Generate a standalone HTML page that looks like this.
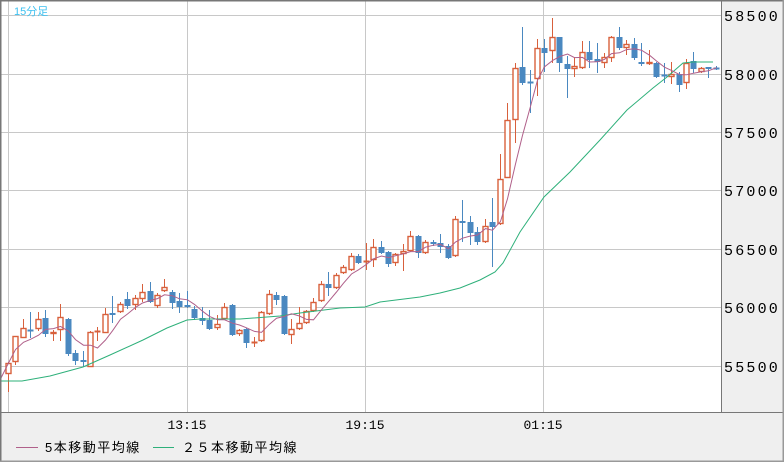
<!DOCTYPE html>
<html><head><meta charset="utf-8"><style>
html,body{margin:0;padding:0;width:784px;height:462px;overflow:hidden;background:#efefef;font-family:"Liberation Sans","Noto Sans CJK JP",sans-serif}
svg{display:block}
</style></head><body>
<svg id="s" width="784" height="462" xmlns="http://www.w3.org/2000/svg">
<rect x="0" y="0" width="784" height="462" fill="#efefef"/>
<rect x="1" y="1" width="720" height="411" fill="#fff"/>
<g stroke="#c8c8c8" stroke-width="1">
<line x1="1" y1="15.5" x2="721" y2="15.5"/><line x1="1" y1="74.5" x2="721" y2="74.5"/>
<line x1="1" y1="132.5" x2="721" y2="132.5"/><line x1="1" y1="190.5" x2="721" y2="190.5"/>
<line x1="1" y1="249.5" x2="721" y2="249.5"/><line x1="1" y1="307.5" x2="721" y2="307.5"/>
<line x1="1" y1="366.5" x2="721" y2="366.5"/>
<line x1="8.5" y1="1" x2="8.5" y2="412"/><line x1="187.5" y1="1" x2="187.5" y2="412"/>
<line x1="365.5" y1="1" x2="365.5" y2="412"/><line x1="543.5" y1="1" x2="543.5" y2="412"/>
</g>
<g id="c"></g>
<polyline fill="none" stroke="#2eb07a" stroke-width="1" points="1,381 22,381 50,376 83,367 110,355 143,340 167,328 187,320 200,319 240,319 280,316 300,313 340,308 365,307 380,302 420,297 440,293 460,288 480,280 495,272 503,263 520,232 544,197 570,172 600,140 627,110 653,88 667,77 683,63 693,62 713,62"/>
<polyline id="ma5" fill="none" stroke="#b0608a" stroke-width="1" points=""/>
<rect x="0" y="0" width="784" height="1.5" fill="#777"/>
<rect x="0" y="0" width="1.5" height="462" fill="#777"/>
<rect x="721" y="0" width="1" height="412" fill="#777"/>
<rect x="0" y="412" width="784" height="1" fill="#777"/>
<rect x="0" y="460.5" width="784" height="1.5" fill="#999"/>
<rect x="782.5" y="0" width="1.5" height="462" fill="#999"/>
<text x="14" y="15" font-size="11" fill="#3cc0f0" font-family="Liberation Sans,Noto Sans CJK JP,sans-serif">15分足</text>
<g font-size="15" fill="#000" font-family="Liberation Mono,monospace" letter-spacing="2.2">
<text x="724" y="21">58500</text><text x="724" y="80">58000</text><text x="724" y="138">57500</text>
<text x="724" y="196">57000</text><text x="724" y="255">56500</text><text x="724" y="313">56000</text>
<text x="724" y="372">55500</text>
</g>
<g font-size="13" fill="#000" font-family="Liberation Mono,monospace">
<text x="187" y="429" text-anchor="middle">13:15</text>
<text x="365" y="429" text-anchor="middle">19:15</text>
<text x="543" y="429" text-anchor="middle">01:15</text>
</g>
<line x1="16" y1="447.5" x2="38" y2="447.5" stroke="#b0608a"/>
<line x1="153" y1="447.5" x2="174" y2="447.5" stroke="#2eb07a"/>
<g font-size="13" fill="#000" font-family="Liberation Sans,Noto Sans CJK JP,sans-serif">
<text x="45" y="452" letter-spacing="1.5">5本移動平均線</text>
<text x="182" y="452" letter-spacing="1.5">２５本移動平均線</text>
</g>
</svg>
<script>
var d=[[363,374,362,392],[362,336,336,365],[338,328,319,338],[330,330,312,338],[329,319,312,331],[318,334,310,337],[334,332,330,341],[330,317,304,341],[319,354,318,356],[353,361,350,365],[360,362,351,367],[367,332,331,367],[332,331,327,341],[333,314,308,333],[313,315,296,323],[312,304,302,313],[299,306,292,309],[305,298,295,310],[299,292,284,302],[291,302,282,303],[306,295,293,308],[291,287,279,292],[292,303,290,309],[301,307,293,313],[305,307,291,308],[309,318,306,320],[318,321,307,325],[320,329,310,330],[328,324,315,330],[319,307,303,320],[305,335,304,336],[334,330,329,336],[329,343,328,348],[342,342,337,347],[341,312,311,342],[314,294,290,315],[295,300,292,305],[296,334,295,335],[335,329,319,344],[329,323,307,330],[323,311,310,324],[311,302,298,312],[301,284,281,302],[284,288,272,296],[288,275,273,289],[273,267,265,274],[270,256,253,271],[256,263,254,264],[262,261,243,270],[260,247,239,267],[247,253,241,254],[252,264,251,267],[263,254,253,266],[254,251,244,271],[251,236,231,252],[236,253,235,258],[253,242,240,254],[242,244,240,246],[243,247,234,253],[246,258,244,259],[256,219,216,257],[221,223,200,242],[222,233,216,245],[232,242,227,245],[242,226,219,243],[222,227,198,267],[224,179,154,225],[178,120,103,178],[120,68,63,143],[67,83,27,85],[82,82,70,113],[79,48,39,96],[48,53,39,72],[51,37,18,63],[37,63,37,72],[64,69,56,98],[69,66,57,77],[68,52,41,69],[52,60,41,68],[59,62,43,73],[63,57,53,68],[58,37,36,62],[37,48,27,50],[48,44,40,55],[44,58,38,60],[62,64,43,66],[64,62,50,65],[63,77,62,78],[75,75,63,83],[77,74,62,84],[74,85,72,92],[83,63,59,89],[61,69,52,73],[72,68,67,73],[67,69,67,78],[68,69,66,70]];
var cs="rrrbrbrrbbbrrrbrbrrbrrbbbbbbrrbrbrrrbbrrrrrbrrrbrrbbrrrbrbbbrbbbrbrrrbbrbrbbrrbbrrbrbbrbbrbrbrbb";
var g=document.getElementById("c"),h="",pts=[],closes=[];
for(var i=0;i<d.length;i++){var t=Math.min(d[i][0],d[i][1]),b=Math.max(d[i][0],d[i][1]),hi=Math.min(d[i][2],t),lo=Math.max(d[i][3],b);
var red=cs[i]=="r";var col=red?"#d8603c":"#4a88c0";var x=Math.round(8+i*7.45)+0.5;
h+='<line x1="'+x+'" y1="'+hi+'" x2="'+x+'" y2="'+t+'" stroke="'+col+'"/>';
h+='<line x1="'+x+'" y1="'+b+'" x2="'+x+'" y2="'+lo+'" stroke="'+col+'"/>';
if(b-t<1.5){h+='<rect x="'+(x-3)+'" y="'+(t-0.5)+'" width="6" height="2" fill="'+col+'"/>';}
else if(red){h+='<rect x="'+(x-2.5)+'" y="'+(t+0.5)+'" width="5" height="'+(b-t-1)+'" fill="#fff" stroke="'+col+'" stroke-width="1.4"/>';}
else{h+='<rect x="'+(x-3)+'" y="'+t+'" width="6" height="'+(b-t)+'" fill="'+col+'"/>';}
closes.push(red?t:b);
var s=0,n=0;for(var k=Math.max(0,i-4);k<=i;k++){s+=closes[k];n++;}
pts.push(x+","+(s/n).toFixed(1));}
g.innerHTML=h;
document.getElementById("ma5").setAttribute("points","1,378 "+pts.join(" "));
</script>
</body></html>
